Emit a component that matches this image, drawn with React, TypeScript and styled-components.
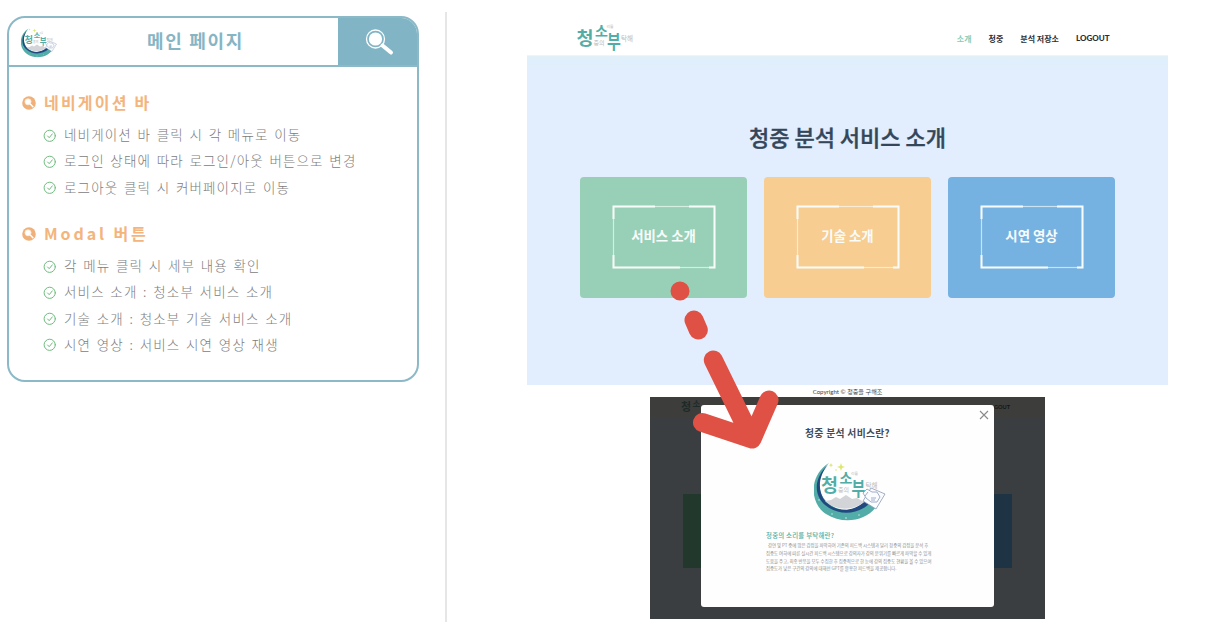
import React from "react";
import styled, { createGlobalStyle } from "styled-components";

const GlobalStyle = createGlobalStyle`
  * { box-sizing: border-box; }
  body { margin: 0; background: #fff; overflow: hidden; font-family: "Noto Sans CJK KR", "Noto Sans", sans-serif; }
  svg { display: block; flex: none; }
  h1, h2, h3, p, ul { margin: 0; padding: 0; font-weight: inherit; }
`;

const Slide = styled.main`
  display: grid;
  grid-template-columns: 445px 2px 1fr;
  width: 1207px;
  height: 633px;
  position: relative;
`;
const Left = styled.section`padding: 16px 0 0 7px;`;
const Divider = styled.div`background: #e6e6e6; margin: 12px 0 11px;`;
const Right = styled.section`
  padding: 12px 0 0 80px;
  display: flex;
  flex-direction: column;
`;

const Panel = styled.div`
  width: 412px;
  height: 366px;
  border: 2px solid #8cb9c8;
  border-radius: 18px;
  overflow: hidden;
`;
const PanelHead = styled.header`
  display: grid;
  grid-template-columns: 48px 1fr 79px;
  align-items: center;
  height: 49px;
  border-bottom: 2px solid #8cb9c8;
`;
const HeadLogo = styled.div`padding: 2px 0 0 12px;`;
const PanelTitle = styled.h1`
  font-size: 18px;
  font-weight: 700;
  letter-spacing: 1.7px;
  line-height: 24px;
  color: #86b5c4;
  padding: 0 0 4px 90px;
  white-space: nowrap;
`;
const SearchBox = styled.div`
  align-self: stretch;
  background: #81b5c5;
  padding: 10px 0 0 27px;
`;
const Section = styled.div<{ $top: number }>`padding: ${(p) => p.$top}px 0 0 13px;`;
const SectionTitle = styled.h2<{ $ls: number }>`
  display: flex;
  align-items: center;
  gap: 8px;
  height: 26px;
  font-size: 16px;
  line-height: 22px;
  font-weight: 700;
  letter-spacing: ${(p) => p.$ls}px;
  color: #f3b57c;
  white-space: nowrap;
  & > span { padding-bottom: 2px; }
`;
const List = styled.ul`list-style: none; padding: 6px 0 0 21px;`;
const Item = styled.li`
  display: flex;
  align-items: center;
  gap: 8px;
  height: 26.3px;
  font-size: 13.5px;
  line-height: 20px;
  font-weight: 300;
  letter-spacing: 1.15px;
  word-spacing: 1.5px;
  color: #7c7c7c;
  white-space: nowrap;
  & > span { padding-bottom: 2px; }
`;

const Site = styled.div`width: 641px;`;
const Nav = styled.nav`
  display: flex;
  justify-content: space-between;
  height: 44px;
  padding: 0 58.5px 0 49px;
  border-bottom: 1px solid #f1f4f5;
`;
const NavLinks = styled.div`
  display: flex;
  gap: 17px;
  padding-top: 20px;
  line-height: 13px;
`;
const NavLink = styled.span<{ $active?: boolean; $latin?: boolean }>`
  font-family: ${(p) => (p.$latin ? '"Lato", sans-serif' : "inherit")};
  font-size: 8px;
  font-weight: ${(p) => (p.$latin ? 900 : 700)};
  color: ${(p) => (p.$active ? "#86cdb9" : "#2b2d33")};
`;
const Hero = styled.div`
  height: 329px;
  background: linear-gradient(#e2eff8 0, #e0effc 6px, #e2eefd 14px);
  padding: 64px 53px 0;
`;
const HeroTitle = styled.h2`
  font-size: 22px;
  font-weight: 500;
  line-height: 32px;
  text-align: center;
  color: #34475a;
  -webkit-text-stroke: 0.4px #34475a;
`;
const Cards = styled.div`
  display: grid;
  grid-template-columns: repeat(3, 167px);
  gap: 17px;
  padding-top: 25px;
`;
const Card = styled.div<{ $bg: string }>`
  display: grid;
  place-items: center;
  height: 121px;
  padding-bottom: 1px;
  border-radius: 4px;
  background: ${(p) => p.$bg};
  & > * { grid-area: 1 / 1; }
`;
const CardLabel = styled.span`
  font-size: 13.4px;
  font-weight: 700;
  line-height: 18px;
  padding-bottom: 5px;
  color: #f8fcfb;
`;
const Footer = styled.footer`
  height: 12px;
  padding-top: 2px;
  font: 6.1px/10px "Lato", "Noto Sans CJK KR", sans-serif;
  text-align: center;
  color: #444;
`;

const Shot = styled.div`
  display: grid;
  grid-template-columns: 51px 293px 51px;
  width: 395px;
  height: 222px;
  margin-left: 123px;
  background: linear-gradient(#3d3d3c 0 20px, #3b3e41 21px);
  overflow: hidden;
`;
const ShotLeft = styled.div`
  display: flex;
  flex-direction: column;
  align-items: flex-end;
  justify-content: space-between;
`;
const ShotLogo = styled.div`height: 19px; width: 20px; overflow: hidden;`;
const ShotRight = styled(ShotLeft)`align-items: flex-start;`;
const ShotText = styled.span`
  font: 700 5.6px/19px "Lato", sans-serif;
  color: #151515;
`;
const DarkCard = styled.div<{ $bg: string }>`
  width: 18px;
  height: 74px;
  margin-bottom: 51px;
  background: ${(p) => p.$bg};
`;
const Modal = styled.div`
  display: flex;
  flex-direction: column;
  align-items: center;
  height: 202px;
  margin-top: 7.5px;
  background: #fefefe;
  border-radius: 3px;
`;
const ModalTop = styled.div`
  align-self: stretch;
  display: flex;
  justify-content: flex-end;
  padding: 5px 5px 0 0;
`;
const ModalTitle = styled.h3`
  font-size: 9.8px;
  font-weight: 700;
  line-height: 14px;
  letter-spacing: 0.3px;
  color: #414d5a;
  padding-top: 6px;
`;
const ModalLogo = styled.div`padding: 22px 0 0 4px;`;
const ModalText = styled.div`
  align-self: stretch;
  padding: 9px 0 0 65px;
  white-space: nowrap;
`;
const Sub = styled.p`
  font-size: 6.4px;
  font-weight: 500;
  line-height: 9px;
  letter-spacing: 0.25px;
  padding-bottom: 2.5px;
  color: #4fada1;
`;
const Line = styled.p`
  font-size: 4.4px;
  line-height: 7.8px;
  color: #8d8d8d;
`;
const Arrow = styled.svg`
  position: absolute;
  left: 660px;
  top: 275px;
`;

const Wordmark = () => (
  <g fontFamily="Noto Sans CJK KR, sans-serif" fontWeight="700" fill="#52ada6">
    <text x="7" y="29.5" fontSize="18.5">청</text>
    <text x="25.5" y="20.5" fontSize="14">소</text>
    <text x="0" y="0" fontSize="15" transform="translate(37.4 33.5) scale(1 1.3)">부</text>
    <g fontWeight="400" fill="#b9b9bb">
      <text x="24" y="29.5" fontSize="6">중의</text>
      <text x="37" y="12.5" fontSize="3.8">리를</text>
      <text x="51.5" y="25.5" fontSize="6.5">탁해</text>
    </g>
  </g>
);

const Emblem = ({ width }: { width: number }) => (
  <svg width={width} height={(width * 60) / 72} viewBox="0 0 72 60">
    <path d="M15 1C-5 13-5 41 12 52C29 63 52 59 62 45L53 39C43 51 22 51 11 38C2 27 5 11 15 1Z" fill="#52aca7" />
    <path d="M14 3C-1 16 0 34 11 43C24 54 43 53 55 42L51 39C40 50 23 51 12 40C3 30 4 14 14 3Z" fill="#22497f" />
    <path d="M11 39l6-1 5-3 4 2 6-4 6 4 5-1 7 4C39 49 22 49 11 39Z" fill="#d2d4d7" />
    <g fill="#dce86a">
      <path d="M27 1l1 3 3 1-3 1-1 3-1-3-3-1 3-1Z" />
      <path d="M17 1l.6 1.6 1.6.6-1.6.6L17 5.400l-.6-1.6-1.6-.6 1.6-.6Z" />
      <circle cx="22" cy="8" r=".8" />
    </g>
    <g fill="#d9efe9">
      <circle cx="5" cy="38" r=".7" /><circle cx="18" cy="52" r=".7" />
      <circle cx="32" cy="56" r=".8" /><circle cx="45" cy="53" r=".7" />
    </g>
    <Wordmark />
    <g fill="#fafcff" stroke="#8c9bb9" strokeWidth=".8" strokeLinejoin="round">
      <path d="M57 26l14 6-9 15-13-8Z" />
      <path d="M49 31l4-4 5 3 5 0 3 5-3 5-6 0-5-4Z" />
      <path d="M57 36l5 0M57 38l4 0M54 30l-3 4" fill="none" />
    </g>
  </svg>
);

const Bullet = () => (
  <svg width="14" height="14" viewBox="0 0 14 14">
    <circle cx="7" cy="7" r="6.8" fill="#efb079" />
    <circle cx="6" cy="5.8" r="3.1" fill="#fff" stroke="#fbe3cc" strokeWidth=".8" />
    <path d="M8.500 8.300l2.400 2.400" stroke="#fff" strokeWidth="1.5" strokeLinecap="round" />
  </svg>
);

const Check = () => (
  <svg width="13" height="13" viewBox="0 0 13 13" fill="none" stroke="#6fbb7e" strokeLinecap="round">
    <circle cx="6.7" cy="6.8" r="5.6" strokeWidth="1" />
    <path d="M4.600 7l1.600 1.700 3.100-3.800" strokeWidth="1" />
  </svg>
);

const Frame = () => (
  <svg width="104" height="64" viewBox="0 0 104 64" fill="none" stroke="#f7fcfa">
    <rect x="1.5" y="1.5" width="101" height="61" strokeWidth="1.2" opacity=".65" />
    <path d="M1.500 14V1.500H43M77 1.500h25.500v61H97M68 62.500H1.500V50" strokeWidth="2" />
  </svg>
);

const sections = [
  {
    title: "네비게이션 바", top: 23, ls: 2.2,
    items: ["네비게이션 바 클릭 시 각 메뉴로 이동", "로그인 상태에 따라 로그인/아웃 버튼으로 변경", "로그아웃 클릭 시 커버페이지로 이동"],
  },
  {
    title: "Modal 버튼", top: 20, ls: 2.9,
    items: ["각 메뉴 클릭 시 세부 내용 확인", "서비스 소개 : 청소부 서비스 소개", "기술 소개 : 청소부 기술 서비스 소개", "시연 영상 : 서비스 시연 영상 재생"],
  },
];

const cards = [
  { label: "서비스 소개", bg: "#97d0b6" },
  { label: "기술 소개", bg: "#f7cd91" },
  { label: "시연 영상", bg: "#75b2e2" },
];

const lines = [
  "\u00a0\u00a0강연 및 PT 중에 많은 감정을 파악하여 기존의 피드백 시스템과 달리 청중의 감정을 분석 후",
  "집중도 여하에 따른 실시간 피드백 시스템으로 강의자가 강의 분위기를 빠르게 파악할 수 있게",
  "도움을 주고, 최종 반응을 모두 수집한 후 집중적으로 한 눈에 강의 집중도 현황을 볼 수 있으며",
  "집중도가 낮은 구간의 강의에 대해선 GPT를 활용한 피드백을 제공합니다.",
];

export default function App() {
  return (
    <>
      <GlobalStyle />
      <Slide>
        <Left>
          <Panel>
            <PanelHead>
              <HeadLogo><Emblem width={36} /></HeadLogo>
              <PanelTitle>메인 페이지</PanelTitle>
              <SearchBox>
                <svg width="30" height="28" viewBox="0 0 30 28">
                  <circle cx="10.5" cy="11" r="9" fill="none" stroke="#fff" strokeWidth="1.3" />
                  <circle cx="10.5" cy="11" r="6.6" fill="#fff" />
                  <path d="M17.500 17.500L26 24.500" stroke="#fff" strokeWidth="4" strokeLinecap="round" />
                </svg>
              </SearchBox>
            </PanelHead>
            {sections.map((s) => (
              <Section key={s.title} $top={s.top}>
                <SectionTitle $ls={s.ls}><Bullet /><span>{s.title}</span></SectionTitle>
                <List>
                  {s.items.map((t) => <Item key={t}><Check /><span>{t}</span></Item>)}
                </List>
              </Section>
            ))}
          </Panel>
        </Left>
        <Divider />
        <Right>
          <Site>
            <Nav>
              <svg width="62" height="43" viewBox="0 0 62 43">
                <g transform="translate(-6.500 3.500)"><Wordmark /></g>
              </svg>
              <NavLinks>
                <NavLink $active>소개</NavLink>
                <NavLink>청중</NavLink>
                <NavLink>분석 저장소</NavLink>
                <NavLink $latin>LOGOUT</NavLink>
              </NavLinks>
            </Nav>
            <Hero>
              <HeroTitle>청중 분석 서비스 소개</HeroTitle>
              <Cards>
                {cards.map((c) => (
                  <Card key={c.label} $bg={c.bg}><Frame /><CardLabel>{c.label}</CardLabel></Card>
                ))}
              </Cards>
            </Hero>
            <Footer>Copyright © 청중을 구해조</Footer>
          </Site>
          <Shot>
            <ShotLeft>
              <ShotLogo>
                <svg width="24" height="19" viewBox="0 0 24 19" fontFamily="Noto Sans CJK KR, sans-serif" fontWeight="700" fill="#1d2a28">
                  <text x="0" y="14" fontSize="11">청</text>
                  <text x="11.5" y="9.5" fontSize="8.5">소</text>
                </svg>
              </ShotLogo>
              <DarkCard $bg="#22382d" />
            </ShotLeft>
            <Modal>
              <ModalTop>
                <svg width="10" height="10" viewBox="0 0 10 10" stroke="#8a8a8a" strokeWidth="1.1">
                  <path d="M1 1l8 8M9 1L1 9" />
                </svg>
              </ModalTop>
              <ModalTitle>청중 분석 서비스란?</ModalTitle>
              <ModalLogo><Emblem width={72} /></ModalLogo>
              <ModalText>
                <Sub>청중의 소리를 부탁해란?</Sub>
                {lines.map((l) => <Line key={l}>{l}</Line>)}
              </ModalText>
            </Modal>
            <ShotRight>
              <ShotText>GOUT</ShotText>
              <DarkCard $bg="#1e3445" />
            </ShotRight>
          </Shot>
        </Right>
        <Arrow width="125" height="180" viewBox="660 275 125 180" fill="none" stroke="#df5145" strokeWidth="19" strokeLinecap="round" strokeLinejoin="round">
          <path d="M680 291h.01M694 320l4.300 10M713.300 360L752 439M702.500 422.600L752 439L769 400" />
        </Arrow>
      </Slide>
    </>
  );
}
